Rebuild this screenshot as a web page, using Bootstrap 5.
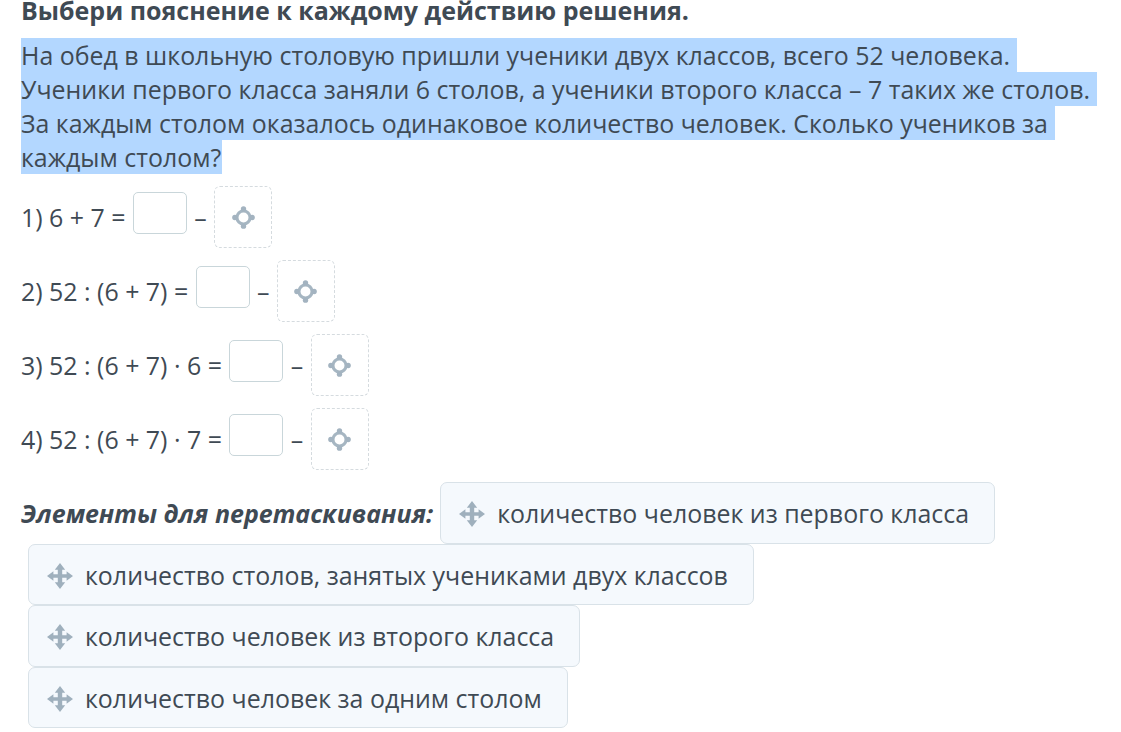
<!DOCTYPE html>
<html lang="ru"><head><meta charset="utf-8"><title>Задание</title>
<link href="https://cdn.jsdelivr.net/npm/bootstrap@5.3.0/dist/css/bootstrap.min.css" rel="stylesheet">
<style>
html,body{height:732px;overflow:hidden}
body{background:#fff;color:#3f4a54;font-family:"Open Sans","Noto Sans",sans-serif;font-size:24.93px;line-height:34px}
.sheet{padding:0 21px;margin-top:-7px}
.task-head{font-weight:700;font-size:25px;line-height:34px;margin:0 0 11px}
.task-text{margin:0 0 12px}
.task-text span{background:#b3d7ff;padding-right:.5px}
.eq-row{height:62px;margin-bottom:12px;gap:7.4px}
.eq-input{width:54px;height:42px;margin-bottom:8px;border:1px solid #c9d6da;border-radius:5px;background:#fff;padding:0}
.drop-slot{width:58px;height:62px;border:1px dashed #d5dbdf;border-radius:6px}
.drag-zone b{font-style:italic;font-weight:700;font-size:25px;vertical-align:middle}
.drag-chip{display:inline-flex;align-items:center;height:61.5px;margin-left:7px;padding:1px 25px 0 18px;gap:12px;background:#f5f9fd;border:1px solid #d9e2e8;border-radius:7px;vertical-align:middle;white-space:nowrap}
.ico{flex:none;display:block}
.ico-move{margin-top:2px}
</style></head><body>
<svg width="0" height="0" class="position-absolute"><defs>
<symbol id="i-move" viewBox="0 0 26 26"><path fill="#9fb0bd" d="M13 0l5.200 6.800h-3v4.400h4.400v-3L26 13l-6.400 4.800v-3h-4.400v4.400h3L13 26l-5.200-6.800h3v-4.400H6.400v3L0 13l6.400-4.800v3h4.400V6.800h-3z"/></symbol>
<symbol id="i-aim" viewBox="0 0 24 24"><circle cx="12" cy="12" r="6.800" fill="none" stroke="#a6b6c2" stroke-width="3.200"/><g fill="#a3b3c0"><circle cx="12" cy="3" r="2.800"/><circle cx="12" cy="21" r="2.800"/><circle cx="3" cy="12" r="2.800"/><circle cx="21" cy="12" r="2.800"/></g></symbol>
</defs></svg>
<main class="sheet">
<h1 class="task-head">Выбери пояснение к каждому действию решения.</h1>
<p class="task-text"><span>На обед в школьную столовую пришли ученики двух классов, всего 52 человека.&nbsp;</span><br><span>Ученики первого класса заняли 6 столов, а ученики второго класса – 7 таких же столов.&nbsp;</span><br><span>За каждым столом оказалось одинаковое количество человек. Сколько учеников за&nbsp;</span><br><span>каждым столом?</span></p>
<div class="eq-row d-flex align-items-center"><span>1) 6 + 7 =</span><input class="eq-input" aria-label="ответ 1"><span>–</span><div class="drop-slot d-flex align-items-center justify-content-center"><svg class="ico" width="23" height="23"><use href="#i-aim"/></svg></div></div>
<div class="eq-row d-flex align-items-center"><span>2) 52 : (6 + 7) =</span><input class="eq-input" aria-label="ответ 2"><span>–</span><div class="drop-slot d-flex align-items-center justify-content-center"><svg class="ico" width="23" height="23"><use href="#i-aim"/></svg></div></div>
<div class="eq-row d-flex align-items-center"><span>3) 52 : (6 + 7) · 6 =</span><input class="eq-input" aria-label="ответ 3"><span>–</span><div class="drop-slot d-flex align-items-center justify-content-center"><svg class="ico" width="23" height="23"><use href="#i-aim"/></svg></div></div>
<div class="eq-row d-flex align-items-center"><span>4) 52 : (6 + 7) · 7 =</span><input class="eq-input" aria-label="ответ 4"><span>–</span><div class="drop-slot d-flex align-items-center justify-content-center"><svg class="ico" width="23" height="23"><use href="#i-aim"/></svg></div></div>
<div class="drag-zone"><b>Элементы для перетаскивания:</b><span class="drag-chip"><svg class="ico ico-move" width="26" height="26"><use href="#i-move"/></svg>количество человек из первого класса</span>
<span class="drag-chip"><svg class="ico ico-move" width="26" height="26"><use href="#i-move"/></svg>количество столов, занятых учениками двух классов</span>
<span class="drag-chip"><svg class="ico ico-move" width="26" height="26"><use href="#i-move"/></svg>количество человек из второго класса</span>
<span class="drag-chip"><svg class="ico ico-move" width="26" height="26"><use href="#i-move"/></svg>количество человек за одним столом</span>
</div>
</main>
</body></html>
